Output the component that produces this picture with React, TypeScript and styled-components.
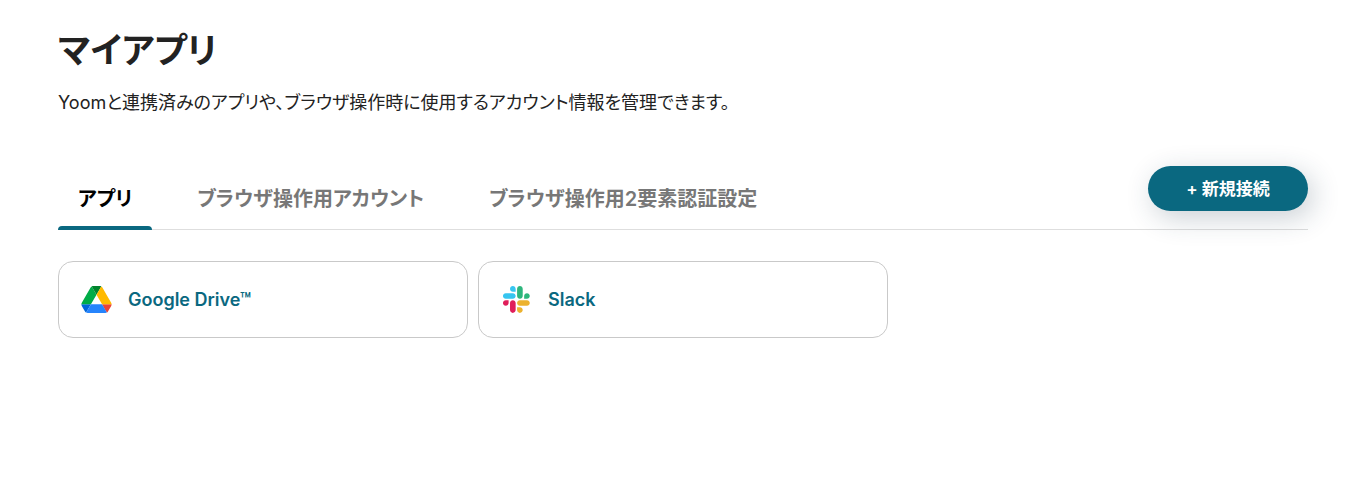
import React from "react";
import styled, { createGlobalStyle } from "styled-components";

const GlobalStyle = createGlobalStyle`
  *, *::before, *::after { box-sizing: border-box; }
  body {
    margin: 0;
    background: #fff;
    color: #222;
    font-family: Inter, "Noto Sans CJK JP", sans-serif;
    font-feature-settings: "palt";
  }
`;

const Page = styled.main`
  padding: 26px 53px 32px 58px;
`;

const Title = styled.h1`
  margin: 0;
  font-size: 35px;
  line-height: 48px;
  font-weight: 700;
`;

const Lead = styled.p`
  margin: 16px 0 0;
  font-size: 18px;
  line-height: 26px;
`;

const Bar = styled.div`
  display: flex;
  justify-content: space-between;
  align-items: flex-start;
  margin-top: 50px;
  border-bottom: 1px solid #dedede;
`;

const TabList = styled.div`
  display: flex;
  gap: 25px;
  margin-bottom: -1px;
`;

const Tab = styled.button<{ $active?: boolean }>`
  position: relative;
  height: 64px;
  padding: 2px 20px 0;
  border: 0;
  background: none;
  color: ${(p) => (p.$active ? "#000" : "#777")};
  font: inherit;
  font-feature-settings: inherit;
  font-size: 20px;
  line-height: 28px;
  font-weight: 600;
  white-space: nowrap;
  cursor: pointer;

  &::after {
    content: "";
    display: ${(p) => (p.$active ? "block" : "none")};
    position: absolute;
    inset: auto 0 0;
    height: 4px;
    border-radius: 4px 4px 0 0;
    background: #0a6880;
  }
`;

const NewButton = styled.button`
  min-width: 160px;
  height: 45px;
  border: 0;
  border-radius: 23px;
  background: #0a6880;
  color: #fff;
  font: inherit;
  font-feature-settings: inherit;
  font-size: 17px;
  line-height: 24px;
  font-weight: 600;
  cursor: pointer;
  box-shadow: 5px 7px 28px rgba(34, 60, 80, 0.24);
`;

const Cards = styled.ul`
  display: grid;
  grid-template-columns: repeat(3, 1fr);
  gap: 10px;
  margin: 31px 0 0;
  padding: 0;
  list-style: none;
`;

const Card = styled.a`
  display: flex;
  align-items: center;
  gap: 16px;
  height: 77px;
  padding: 0 22px;
  border: 1px solid #c9c9c9;
  border-radius: 15px;
  color: #0a6880;
  font-size: 18px;
  font-weight: 600;
  text-decoration: none;

  svg { flex: none; }
`;

const DriveIcon = () => (
  <svg width="31" height="27" viewBox="0 0 87.3 78" aria-hidden="true">
    <path d="m6.6 66.85 3.85 6.65c.8 1.4 1.95 2.5 3.3 3.3l13.75-23.8h-27.5c0 1.55.4 3.1 1.2 4.5z" fill="#0066da" />
    <path d="m43.65 25-13.75-23.8c-1.35.8-2.5 1.9-3.3 3.3l-25.4 44a9.06 9.06 0 0 0 -1.2 4.5h27.5z" fill="#00ac47" />
    <path d="m73.55 76.8c1.35-.8 2.5-1.9 3.3-3.3l1.6-2.75 7.65-13.25c.8-1.4 1.2-2.95 1.2-4.5h-27.502l5.852 11.5z" fill="#ea4335" />
    <path d="m43.65 25 13.75-23.8c-1.35-.8-2.9-1.2-4.5-1.2h-18.5c-1.6 0-3.15.45-4.5 1.2z" fill="#00832d" />
    <path d="m59.8 53h-32.3l-13.75 23.8c1.35.8 2.9 1.2 4.5 1.2h50.8c1.6 0 3.15-.45 4.5-1.2z" fill="#2684fc" />
    <path d="m73.4 26.5-12.7-22c-.8-1.4-1.95-2.5-3.3-3.3l-13.75 23.8 16.15 28h27.45c0-1.55-.4-3.1-1.2-4.5z" fill="#ffba00" />
  </svg>
);

const SlackIcon = () => (
  <svg width="31" height="27" viewBox="-9 0 142 122.8" aria-hidden="true">
    <path d="M25.8 77.6c0 7.1-5.8 12.9-12.9 12.9S0 84.7 0 77.6s5.8-12.9 12.9-12.9h12.9v12.9zm6.5 0c0-7.1 5.8-12.9 12.9-12.9s12.9 5.8 12.9 12.9v32.3c0 7.1-5.8 12.9-12.9 12.9s-12.9-5.8-12.9-12.9V77.6z" fill="#e01e5a" />
    <path d="M45.2 25.8c-7.1 0-12.9-5.8-12.9-12.9S38.1 0 45.2 0s12.9 5.8 12.9 12.9v12.9H45.2zm0 6.5c7.1 0 12.9 5.8 12.9 12.9s-5.8 12.9-12.9 12.9H12.9C5.8 58.1 0 52.3 0 45.2s5.8-12.9 12.9-12.9h32.3z" fill="#36c5f0" />
    <path d="M97 45.2c0-7.1 5.8-12.9 12.9-12.9s12.9 5.8 12.9 12.9-5.8 12.9-12.9 12.9H97V45.2zm-6.5 0c0 7.1-5.8 12.9-12.9 12.9s-12.9-5.8-12.9-12.9V12.9C64.7 5.8 70.5 0 77.6 0s12.9 5.8 12.9 12.9v32.3z" fill="#2eb67d" />
    <path d="M77.6 97c7.1 0 12.9 5.8 12.9 12.9s-5.8 12.9-12.9 12.9-12.9-5.8-12.9-12.9V97h12.9zm0-6.5c-7.1 0-12.9-5.8-12.9-12.9s5.8-12.9 12.9-12.9h32.3c7.1 0 12.9 5.8 12.9 12.9s-5.8 12.9-12.9 12.9H77.6z" fill="#ecb22e" />
  </svg>
);

export default function App() {
  return (
    <>
      <GlobalStyle />
      <Page lang="ja">
        <Title>マイアプリ</Title>
        <Lead>Yoomと連携済みのアプリや、ブラウザ操作時に使用するアカウント情報を管理できます。</Lead>
        <Bar>
          <TabList role="tablist">
            <Tab type="button" role="tab" aria-selected="true" $active>アプリ</Tab>
            <Tab type="button" role="tab" aria-selected="false">ブラウザ操作用アカウント</Tab>
            <Tab type="button" role="tab" aria-selected="false">ブラウザ操作用2要素認証設定</Tab>
          </TabList>
          <NewButton type="button">+ 新規接続</NewButton>
        </Bar>
        <Cards>
          <li><Card href="#google-drive"><DriveIcon />Google Drive™</Card></li>
          <li><Card href="#slack"><SlackIcon />Slack</Card></li>
        </Cards>
      </Page>
    </>
  );
}
